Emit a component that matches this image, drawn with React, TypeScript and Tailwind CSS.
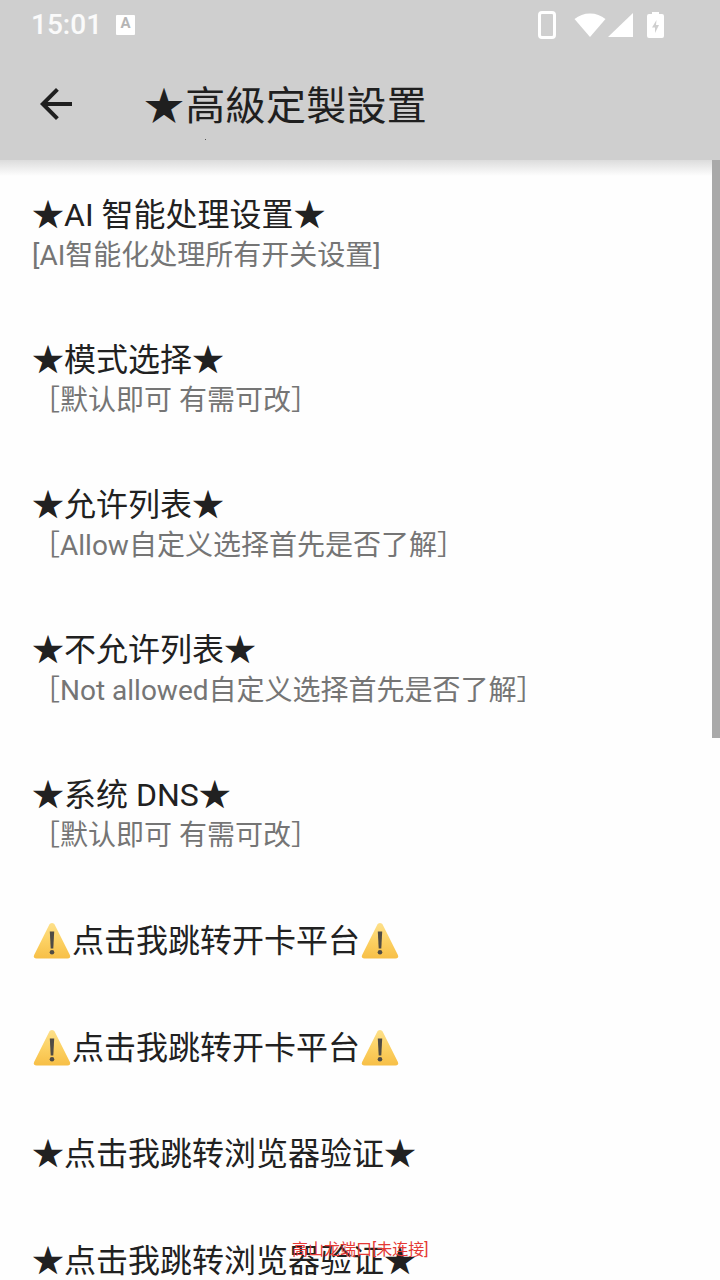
const fontStack = { fontFamily: "Roboto, 'Noto Sans CJK SC', sans-serif" };

const rows = [
  { title: "★AI 智能处理设置★", sub: "[AI智能化处理所有开关设置]" },
  { title: "★模式选择★", sub: "［默认即可 有需可改］" },
  { title: "★允许列表★", sub: "［Allow自定义选择首先是否了解］" },
  { title: "★不允许列表★", sub: "［Not allowed自定义选择首先是否了解］" },
  { title: "★系统 DNS★", sub: "［默认即可 有需可改］" },
];

const Warning = () => (
  <svg viewBox="-2 -2 40 40" className="w-10 h-10 shrink-0">
    <defs>
      <linearGradient id="warn" x1="0" y1="0" x2="0" y2="1">
        <stop offset="0" stopColor="#fde08a" />
        <stop offset="0.5" stopColor="#fcd163" />
        <stop offset="1" stopColor="#f7bf47" />
      </linearGradient>
    </defs>
    <path
      d="M18 0c1.2 0 2.2.7 2.9 1.9l15 30c1 2-.1 3.6-2.5 3.6H2.6c-2.4 0-3.5-1.6-2.5-3.6l15-30C15.8.7 16.8 0 18 0z"
      fill="url(#warn)"
    />
    <path d="M15.8 8.500h4.400l-.9 17h-2.600z" fill="#4f4b45" />
    <circle cx="18" cy="29.300" r="2.300" fill="#4f4b45" />
  </svg>
);

const StatusBar = () => (
  <div className="h-12 flex items-center justify-between pl-[31px] pr-[56px] pt-[1px]">
    <div className="flex items-center gap-[14px]">
      <span className="text-[28px] leading-none text-white/90 font-medium">15:01</span>
      <div className="w-[19px] h-[20px] bg-white rounded-[1px] flex items-start justify-center">
        <span className="text-[15px] leading-[16px] font-bold text-[#b5b5b5]">A</span>
      </div>
    </div>
    <div className="flex items-center">
      <svg width="18" height="28" viewBox="0 0 18 28" className="mr-[18px]">
        <rect x="1.500" y="1.500" width="15" height="25" rx="2.500" fill="none" stroke="#fff" strokeWidth="3" />
      </svg>
      <svg width="32" height="24" viewBox="0 0 32 24" className="mr-[2px]">
        <path d="M16 24 0.500 6C5 2.500 10 0.500 16 0.500S27 2.500 31.500 6z" fill="#fff" />
      </svg>
      <svg width="26" height="24" viewBox="0 0 26 24" className="mr-[13px]">
        <path d="M25 0v24H0z" fill="#fff" />
      </svg>
      <svg width="17" height="26" viewBox="0 0 17 26">
        <path
          fillRule="evenodd"
          d="M5 0h7v2h3a2 2 0 0 1 2 2v20a2 2 0 0 1-2 2H2a2 2 0 0 1-2-2V4a2 2 0 0 1 2-2h3zM9.500 8 5 15.500h3V21l4-8H9z"
          fill="#fff"
        />
      </svg>
    </div>
  </div>
);

const Header = () => (
  <div className="h-40 bg-[#cfcfcf] shrink-0">
    <StatusBar />
    <div className="h-[112px] flex items-center">
      <div className="w-[144px] flex justify-center -translate-x-[16px]">
        <svg width="48" height="48" viewBox="0 0 24 24">
          <path d="M20 11H7.830l5.590-5.590L12 4l-8 8 8 8 1.410-1.410L7.830 13H20v-2z" fill="#1f1f1f" />
        </svg>
      </div>
      <h1 className="text-[40px] leading-[48px] text-[#1f1f1f] font-normal mt-[6px] tracking-[0.3px]">
        <span className="mr-[1px]">★</span>高級定製設置
      </h1>
    </div>
  </div>
);

const LinkRow = ({ warn, label }: { warn?: boolean; label: string }) => (
  <div className="h-[107px] pt-1 flex items-center text-[32px] text-[#212121]">
    {warn && <Warning />}
    <span>{label}</span>
    {warn && <Warning />}
  </div>
);

export default function App() {
  return (
    <div className="relative w-[720px] h-[1280px] overflow-hidden bg-[#fefefe] flex flex-col" style={fontStack}>
      <Header />

      <main className="flex flex-col px-8">
        {rows.map(({ title, sub }, i) => (
          <div key={i} className="h-[145px] pt-[34px]">
            <div className="text-[32px] leading-[42px] text-[#212121]">{title}</div>
            <div className="text-[28px] leading-[40px] text-[#757575]">{sub}</div>
          </div>
        ))}
        <LinkRow warn label="点击我跳转开卡平台" />
        <LinkRow warn label="点击我跳转开卡平台" />
        <div className="-mt-px">
          <LinkRow label="★点击我跳转浏览器验证★" />
          <LinkRow label="★点击我跳转浏览器验证★" />
        </div>
      </main>

      {/* shadow under the toolbar */}
      <div className="absolute top-40 left-0 right-0 h-4 bg-gradient-to-b from-[#dcdcdc] to-transparent" />
      {/* scrollbar */}
      <div className="absolute top-40 right-0 w-2 h-[578px] bg-[#a9a9a9]" />
      <div className="absolute top-[139px] left-[205px] w-px h-px bg-[#555]" />
      <div className="absolute top-[1240px] left-[292px] text-[16px] leading-[20px] text-[#e53935] whitespace-nowrap">
        高山龙端口[未连接]
      </div>
    </div>
  );
}
